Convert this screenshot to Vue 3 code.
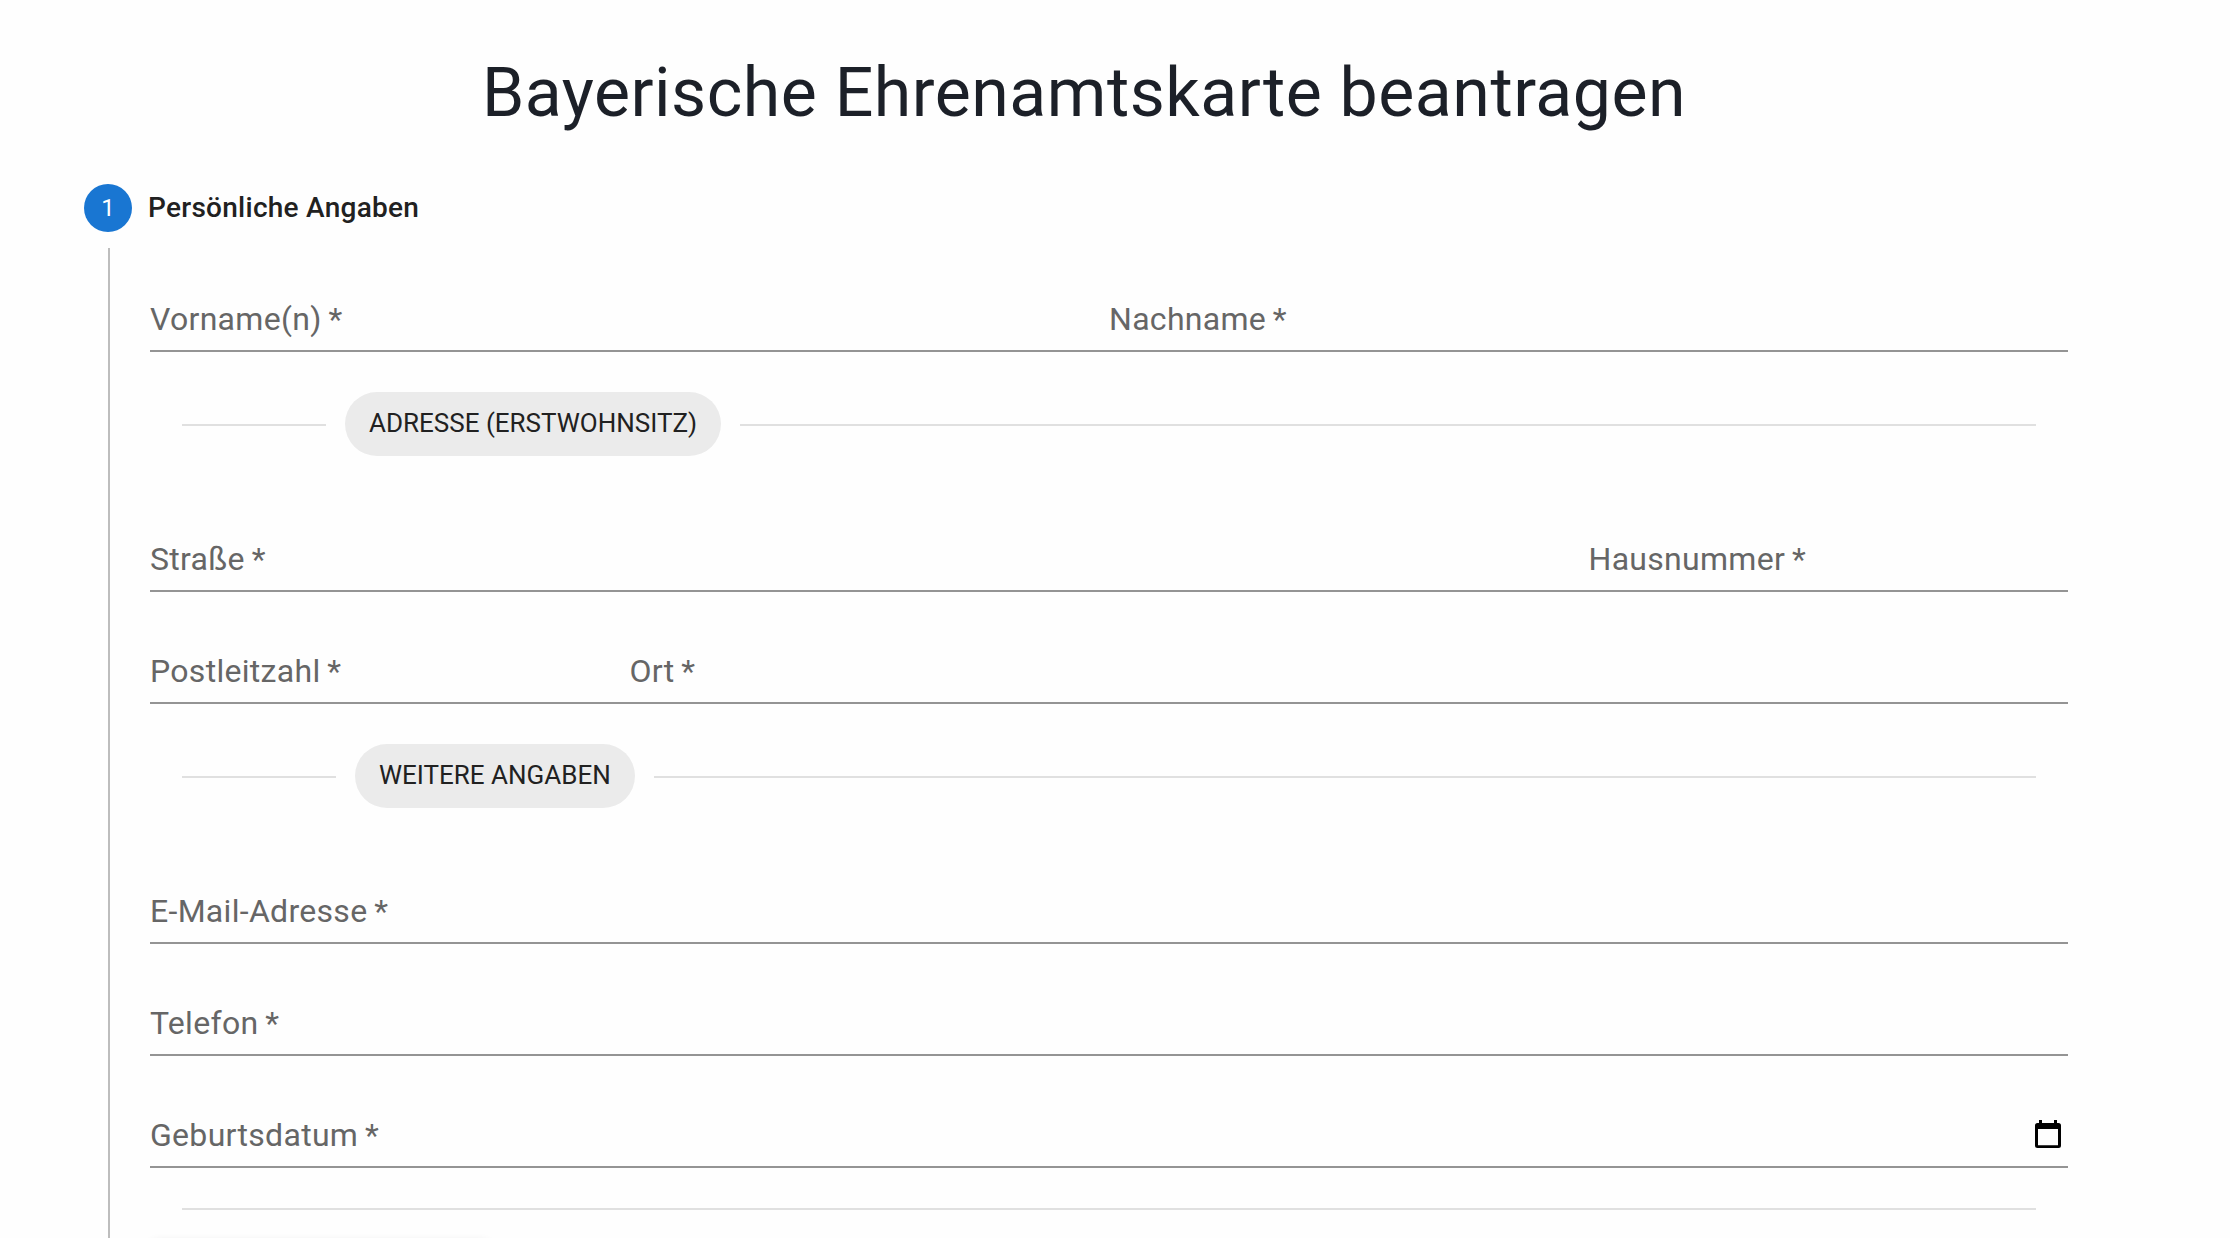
<script setup>
const sections = [
  { rows: [[{ label: 'Vorname(n)', span: 2 }, { label: 'Nachname', span: 2 }]] },
  {
    title: 'ADRESSE (ERSTWOHNSITZ)',
    kind: 'address',
    rows: [
      [{ label: 'Straße', span: 3 }, { label: 'Hausnummer', span: 1 }],
      [{ label: 'Postleitzahl', span: 1 }, { label: 'Ort', span: 3 }],
    ],
  },
  {
    title: 'WEITERE ANGABEN',
    kind: 'more',
    rows: [
      [{ label: 'E-Mail-Adresse', span: 4 }],
      [{ label: 'Telefon', span: 4 }],
      [{ label: 'Geburtsdatum', span: 4, date: true }],
    ],
  },
]
</script>

<template>
  <main class="page">
    <h1 class="title">Bayerische Ehrenamtskarte beantragen</h1>
    <div class="step">
      <span class="badge">1</span>
      <span class="step-label">Persönliche Angaben</span>
    </div>
    <form class="content">
      <section v-for="(section, i) in sections" :key="i">
        <div v-if="section.title" class="divider" :class="section.kind">
          <span class="line start"></span>
          <span class="chip">{{ section.title }}</span>
          <span class="line"></span>
        </div>
        <div v-for="(row, r) in section.rows" :key="r" class="row">
          <label v-for="field in row" :key="field.label" class="field" :class="'span-' + field.span">
            <span>{{ field.label }} <span class="star">*</span></span>
            <svg v-if="field.date" class="calendar" viewBox="0 0 26 28">
              <path fill-rule="evenodd" d="M4 0h3v3h12V0h3v3h1.500A2.500 2.500 0 0 1 26 5.500V25.500A2.500 2.500 0 0 1 23.500 28H2.500A2.500 2.500 0 0 1 0 25.500V5.500A2.500 2.500 0 0 1 2.500 3H4zM3 9v16.300h20V9z" />
            </svg>
          </label>
        </div>
      </section>
      <div class="divider last"><span class="line"></span></div>
      <div class="button"></div>
    </form>
  </main>
</template>

<style>
body {
  background: #fefefe;
  overflow: hidden;
}
</style>

<style scoped>
.page {
  box-sizing: border-box;
  width: 2230px;
  height: 1238px;
  padding: 51px 62px 0 84px;
  overflow: hidden;
  display: flex;
  flex-direction: column;
  font-family: Roboto, sans-serif;
}
.title {
  flex: none;
  margin: 0;
  width: 2000px;
  height: 84px;
  line-height: 84px;
  text-align: center;
  font-size: 68px;
  font-weight: 400;
  letter-spacing: 0.5px;
  color: #1c2028;
  white-space: nowrap;
}
.step {
  flex: none;
  display: flex;
  align-items: center;
  gap: 16px;
  height: 48px;
  margin-top: 49px;
}
.badge {
  width: 48px;
  height: 48px;
  border-radius: 50%;
  background: #1976d2;
  color: #fff;
  font-size: 24px;
  line-height: 48px;
  text-align: center;
}
.step-label {
  padding-bottom: 2px;
  font-size: 28px;
  font-weight: 500;
  letter-spacing: 0.27px;
  color: #212121;
}
.content {
  flex: 1;
  min-height: 0;
  margin: 16px 0 0 24px;
  padding: 0 100px 0 40px;
  border-left: 2px solid #bdbdbd;
  display: flow-root;
}
.row {
  box-sizing: border-box;
  display: flex;
  width: 1918px;
  height: 72px;
  margin-top: 32px;
  padding-bottom: 8px;
  border-bottom: 2px solid #949494;
}
.row + .row {
  margin-top: 40px;
}
.field {
  display: flex;
  justify-content: space-between;
  align-items: flex-end;
  line-height: 46px;
  font-size: 32px;
  letter-spacing: 0.3px;
  color: #666;
  white-space: nowrap;
}
.star { margin-left: -1.5px; }
.span-1 { width: 25%; }
.span-2 { width: 50%; }
.span-3 { width: 75%; }
.span-4 { width: 100%; }
.calendar {
  width: 26px;
  height: 28px;
  margin: 0 7px 10px 0;
  fill: #000;
}
.divider {
  display: flex;
  align-items: center;
  width: 1854px;
  margin: 40px 0 64px 32px;
}
.line {
  flex: 1;
  height: 2px;
  margin-top: 2px;
  background: #e0e0e0;
}
.start { flex: none; }
.address .start { width: 144px; }
.more .start { width: 154px; }
.chip {
  height: 64px;
  padding: 0 24px;
  margin: 0 19px;
  border-radius: 32px;
  background: #ebebeb;
  color: #212121;
  font-size: 26px;
  line-height: 62px;
  white-space: nowrap;
}
.last { margin: 38px 0 0 32px; }
.button {
  width: 340px;
  height: 60px;
  margin-top: 30px;
  border-radius: 8px;
  box-shadow: 0 2px 10px rgba(0, 0, 0, 0.12);
}
</style>
